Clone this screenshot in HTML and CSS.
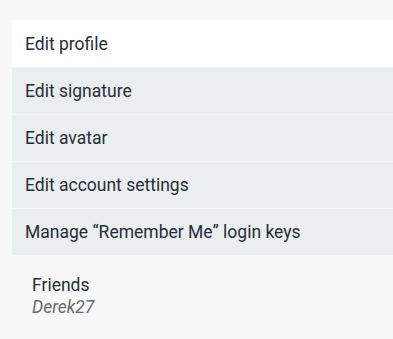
FILE: index.html
```html
<!DOCTYPE html>
<html lang="en">

<head>
    <meta charset="UTF-8">
    <meta name="viewport" content="width=device-width, initial-scale=1.0">
    <title>Account</title>
    <link rel="stylesheet" href="styles.css">
</head>

<body>
    <ul class="menu">
        <li class="menu-item active">Edit profile</li>
        <li class="menu-item">Edit signature</li>
        <li class="menu-item">Edit avatar</li>
        <li class="menu-item">Edit account settings</li>
        <li class="menu-item">Manage “Remember Me” login keys</li>
    </ul>

    <div class="friends">
        <div class="friends-title">Friends</div>
        <div class="friends-name">Derek27</div>
    </div>
</body>

</html>
```

FILE: styles.css
```css
body {
    margin: 0;
    padding: 20px 0 0 12px;
    background-color: #f8f8f8;
    font-family: Roboto, "Liberation Sans", sans-serif;
    color: #252d3a;
}

.menu {
    list-style: none;
    margin: 0;
    padding: 0;
}

.menu-item {
    height: 46px;
    line-height: 46px;
    padding-left: 13px;
    font-size: 17.5px;
    background-color: #ebeeef;
    border-top: 1px solid #f4f5f6;
}

.menu-item.active {
    background-color: #ffffff;
    border-top-color: #ffffff;
}

.friends {
    padding: 19px 0 0 20px;
}

.friends-title {
    font-size: 17.5px;
    line-height: 22px;
}

.friends-name {
    font-size: 17.5px;
    line-height: 22px;
    font-style: italic;
    color: #66696d;
}
```
